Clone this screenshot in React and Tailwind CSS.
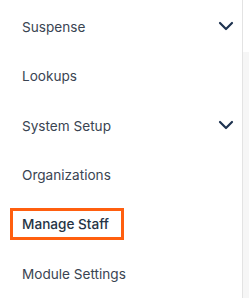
import React from "react";

const Chevron = () => (
  <svg width="24" height="24" viewBox="0 0 24 24" fill="none" stroke="#1e3350" strokeWidth="2.2" strokeLinecap="round" strokeLinejoin="round">
    <path d="m6 9 6 6 6-6" />
  </svg>
);

const items = [
  { label: "Suspense", chevron: true },
  { label: "Lookups" },
  { label: "System Setup", chevron: true },
  { label: "Organizations" },
  { label: "Manage Staff", active: true },
  { label: "Module Settings" },
];

export default function App() {
  return (
    <div className="flex w-[249px] h-[298px] overflow-hidden bg-white" style={{ fontFamily: "Inter, 'Noto Sans', sans-serif" }}>
      <nav className="w-[243px] shrink-0 border-r border-[#e3e3e3] flex flex-col pt-[1px]">
        {items.map((it) => (
          <div key={it.label} className="h-[50px] flex items-center justify-between pr-[4px]">
            {it.active ? (
              <span className="ml-[10px] h-[32px] flex items-center border-[3px] border-[#ff5f0f] pl-[9px] pr-[12px] pt-[1px] text-[13.6px] font-medium text-[#263445]">
                {it.label}
              </span>
            ) : (
              <span className="pl-[22px] pt-[2px] text-[13.6px] text-[#3a4452]">{it.label}</span>
            )}
            {it.chevron && <Chevron />}
          </div>
        ))}
      </nav>
      <div className="flex-1 flex flex-col">
        <div className="h-[52px] bg-white" />
        <div className="flex-1 bg-[#f6f6f6]" />
      </div>
    </div>
  );
}
